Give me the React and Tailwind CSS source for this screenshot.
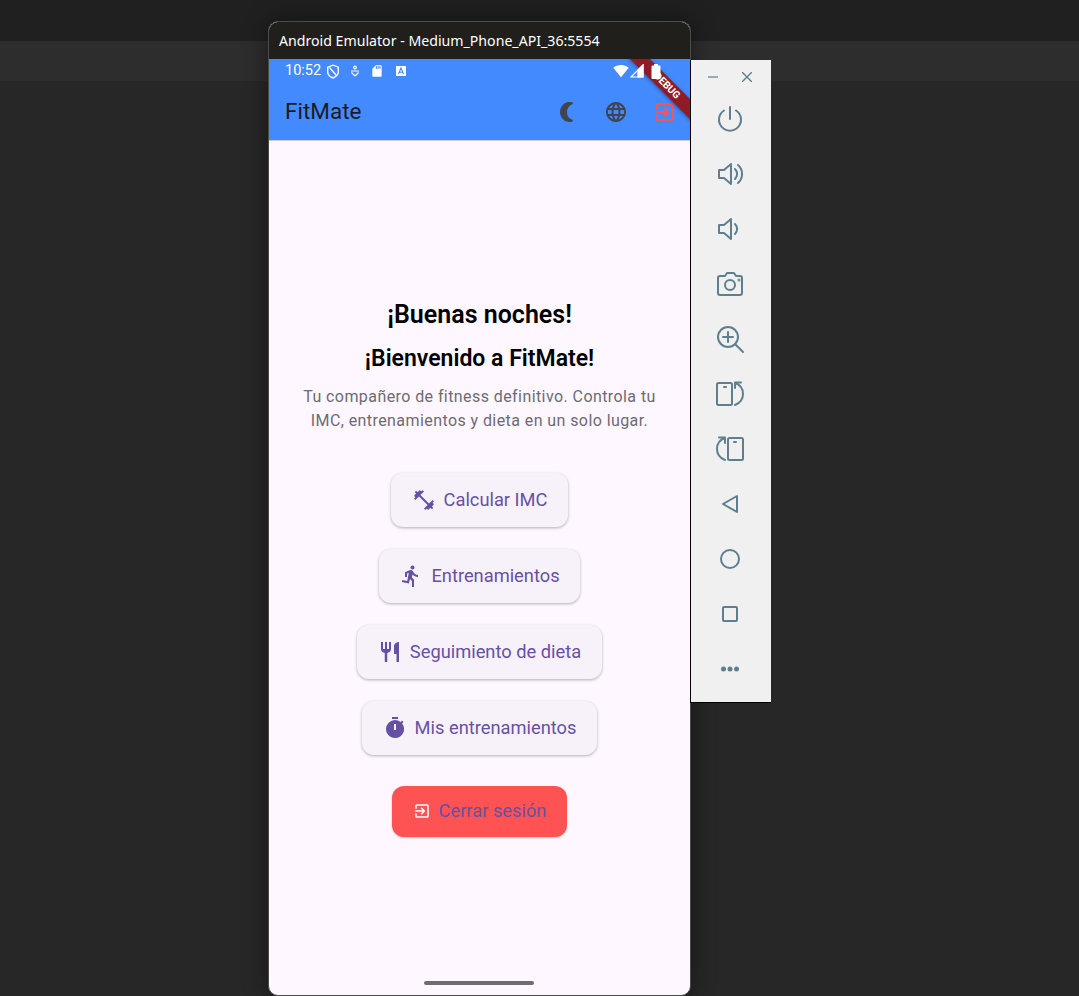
import { MdFitnessCenter, MdDirectionsRun, MdRestaurant, MdTimer, MdExitToApp, MdLanguage, MdNightlightRound, MdSignalWifi4Bar, MdSdCard } from 'react-icons/md';

const roboto = { fontFamily: 'Roboto, sans-serif' };

function Boton({ icono: Icono, texto }) {
  return (
    <button className="flex h-[54px] items-center gap-2 rounded-xl bg-[#f7f2fa] px-[20.5px] text-[18.3px] text-[#6750a4] shadow-[0_1px_3px_rgba(0,0,0,0.3)]">
      <Icono size={24} />
      <span>{texto}</span>
    </button>
  );
}

function Trazo({ children, size = 32 }) {
  return (
    <svg width={size} height={size} viewBox="0 0 32 32" fill="none" stroke="#5f7f8e" strokeWidth="2" strokeLinecap="round" strokeLinejoin="round">
      {children}
    </svg>
  );
}

const iconosPanel = [
  <Trazo key="power"><path d="M16 4v12" /><path d="M10 7.5a11 11 0 1 0 12 0" /></Trazo>,
  <Trazo key="vol-up"><path d="M5 12h5l7-6v20l-7-6H5z" /><path d="M21 11a7 7 0 0 1 0 10" /><path d="M24 7a12 12 0 0 1 0 18" /></Trazo>,
  <Trazo key="vol-down"><path d="M5 12h5l7-6v20l-7-6H5z" /><path d="M21 11a7 7 0 0 1 0 10" /></Trazo>,
  <Trazo key="camera"><path d="M6 8h5l2-3h7l2 3h4a2 2 0 0 1 2 2v15a2 2 0 0 1-2 2H6a2 2 0 0 1-2-2V10a2 2 0 0 1 2-2z" /><circle cx="16" cy="17" r="5" /><circle cx="25" cy="12" r="0.5" /></Trazo>,
  <Trazo key="zoom"><circle cx="14" cy="14" r="10" /><path d="M14 9v10M9 14h10M21.5 21.5L29 29" /></Trazo>,
  <Trazo key="rot-right"><rect x="3" y="5" width="15" height="22" rx="1.5" /><path d="M10 9h2" /><path d="M21 10V4.5h6" /><path d="M21 5C27 7 29 11 29 16C29 21 26 25 21 27" /></Trazo>,
  <Trazo key="rot-left"><rect x="14" y="5" width="15" height="22" rx="1.5" /><path d="M20 9h2" /><path d="M11 10V4.5H5" /><path d="M11 5C5 7 3 11 3 16C3 21 6 25 11 27" /></Trazo>,
  <Trazo key="back"><path d="M23 8v16L9 16z" /></Trazo>,
  <Trazo key="home"><circle cx="16" cy="16" r="9" /></Trazo>,
  <Trazo key="square"><rect x="9" y="9" width="14" height="14" rx="1" /></Trazo>,
  <svg key="more" width="32" height="32" viewBox="0 0 32 32" fill="#5f7f8e"><circle cx="9.5" cy="16" r="2.5" /><circle cx="16" cy="16" r="2.5" /><circle cx="22.5" cy="16" r="2.5" /></svg>,
];

export default function App() {
  return (
    <div className="relative h-[996px] w-[1079px] overflow-hidden bg-[#272727]">
      <div className="h-[41px] bg-[#202020]" />
      <div className="h-[40px] bg-[#2d2d2d]" />

      {/* ventana del emulador */}
      <div className="absolute left-[268px] top-[21px] flex h-[975px] w-[423px] flex-col overflow-hidden rounded-[10px] border border-[#4b4b4b] bg-[#fef7ff] shadow-[0_0_24px_rgba(0,0,0,0.45)]" style={roboto}>
        <div className="flex h-[37px] shrink-0 items-center bg-[#211f1c] pl-[10px] text-[14.15px] text-white" style={{ fontFamily: '"Noto Sans", sans-serif' }}>
          Android Emulator - Medium_Phone_API_36:5554
        </div>

        <div className="relative h-[81px] shrink-0 overflow-hidden bg-[#448aff]">
          <div className="relative z-10 flex h-[24px] items-center justify-between pl-[16px] pr-[29px] text-white">
            <div className="flex items-center gap-[5px]">
              <span className="text-[14.5px] leading-none">10:52</span>
              <svg width="14" height="15" viewBox="0 0 14 15" fill="none" stroke="white" strokeWidth="1.4"><path d="M7 1.2l5.3 2v4.6c0 3-2.2 5-5.3 6.2-3.1-1.2-5.3-3.2-5.3-6.2V3.2z" /><path d="M3.5 3.5l7 8" /></svg>
              <svg className="ml-[4px]" width="12" height="12" viewBox="0 0 12 12" fill="none" stroke="white" strokeWidth="1.2"><circle cx="6" cy="2.5" r="1.3" /><path d="M2 6h8M6 11L2.5 7.5M6 11l3.5-3.5" /></svg>
              <MdSdCard className="ml-[4px]" size={14} />
              <svg className="ml-[6px]" width="12" height="12" viewBox="0 0 12 12"><rect x="1" y="1" width="10" height="10" fill="white" /><path d="M3.5 9L6 3l2.5 6M4.5 7.2h3" fill="none" stroke="#448aff" strokeWidth="1.1" /></svg>
            </div>
            <div className="flex items-center gap-[1px]">
              <MdSignalWifi4Bar size={16} />
              <svg width="14" height="14" viewBox="0 0 14 14" fill="none" stroke="white" strokeWidth="1.2"><path d="M1 13L13 1v12z" /><path d="M8 13V6l5-5v12z" fill="white" /></svg>
              <svg className="ml-[6px]" width="10" height="15" viewBox="0 0 10 15" fill="white"><path d="M3 0h4v1.5h1.5a1 1 0 0 1 1 1V14a1 1 0 0 1-1 1h-7a1 1 0 0 1-1-1V2.5a1 1 0 0 1 1-1H3z" /></svg>
            </div>
          </div>

          <div className="flex h-[57px] items-center pl-[16px] pr-[13px] text-[#1d1b20]">
            <span className="flex-1 text-[22.5px] leading-none">FitMate</span>
            <div className="flex items-center gap-[25px] text-[#3f4450]">
              <MdNightlightRound size={24} />
              <MdLanguage size={24} />
              <MdExitToApp size={24} className="text-[#ff5252]" />
            </div>
          </div>

          <div className="absolute right-[-29px] top-[22px] w-[100px] rotate-45 bg-[#8e1b26] pr-[6px] text-center text-[10.2px] font-bold leading-[14px] text-white shadow-[0_1px_4px_rgba(0,0,0,0.4)]">
            DEBUG
          </div>
        </div>

        <div className="relative flex flex-1 flex-col items-center justify-center border-t border-[#cfc8d4] pt-[1px]">
          <h1 className="text-[25px] font-semibold leading-[28px] text-black">¡Buenas noches!</h1>
          <h2 className="mt-[17px] text-[23px] font-semibold leading-[26px] text-black">¡Bienvenido a FitMate!</h2>
          <p className="mt-[13px] w-[370px] text-center text-[16px] leading-[24px] tracking-[0.42px] text-[#6e6a72]">
            Tu compañero de fitness definitivo. Controla tu IMC, entrenamientos y dieta en un solo lugar.
          </p>

          <div className="mt-[40px] flex flex-col items-center gap-[22px]">
            <Boton icono={MdFitnessCenter} texto="Calcular IMC" />
            <Boton icono={MdDirectionsRun} texto="Entrenamientos" />
            <Boton icono={MdRestaurant} texto="Seguimiento de dieta" />
            <Boton icono={MdTimer} texto="Mis entrenamientos" />
          </div>

          <button className="mt-[31px] flex h-[51px] items-center gap-2 rounded-xl bg-[#ff5252] px-[20.5px] text-[18.3px] text-[#6750a4] shadow-[0_1px_2px_rgba(0,0,0,0.2)]">
            <MdExitToApp size={18} className="text-white" />
            <span>Cerrar sesión</span>
          </button>

          <div className="absolute bottom-[10px] left-[155px] h-[4px] w-[110px] rounded-full bg-[#6f6b72]" />
        </div>
      </div>

      {/* panel lateral del emulador */}
      <div className="absolute left-[690px] top-[60px] flex h-[643px] w-[81px] flex-col items-center border-b border-l border-black bg-[#f0f0f0]">
        <div className="flex h-[34px] w-full items-center justify-between pl-[17px] pr-[19px] text-[#5f7f8e]">
          <svg width="10" height="10" viewBox="0 0 10 10" stroke="currentColor" strokeWidth="1.2"><path d="M0 5h10" /></svg>
          <svg width="10" height="10" viewBox="0 0 10 10" stroke="currentColor" strokeWidth="1.4"><path d="M0 0l10 10M10 0L0 10" /></svg>
        </div>
        <div className="flex flex-col items-center gap-[23px] pr-[2px] pt-[9px]">
          {iconosPanel}
        </div>
      </div>
    </div>
  );
}
